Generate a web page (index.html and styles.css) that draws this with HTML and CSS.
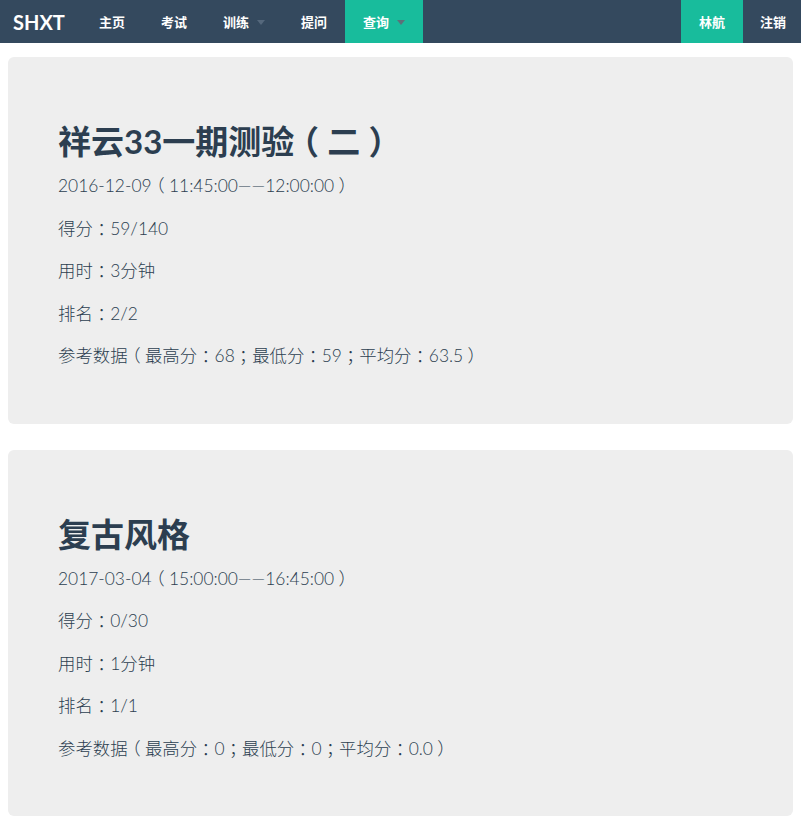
FILE: index.html
```html
<!DOCTYPE html>
<html lang="zh-CN">
<head>
<meta charset="utf-8">
<title>SHXT</title>
<link rel="stylesheet" href="styles.css">
</head>
<body>
<nav class="navbar">
  <a class="brand" href="#">SHXT</a>
  <ul class="nav">
    <li><a href="#">主页</a></li>
    <li><a href="#">考试</a></li>
    <li><a href="#">训练<span class="caret"></span></a></li>
    <li><a href="#">提问</a></li>
    <li class="active"><a href="#">查询<span class="caret"></span></a></li>
  </ul>
  <ul class="nav nav-right">
    <li class="active"><a href="#">林航</a></li>
    <li class="last"><a href="#">注销</a></li>
  </ul>
</nav>
<main class="container">
  <section class="jumbotron">
    <h1>祥云33一期测验<span class="pu">（</span>二<span class="pu">）</span></h1>
    <p>2016-12-09<span class="pu">（</span>11:45:00——12:00:00<span class="pu">）</span></p>
    <p>得分<span class="pu">：</span>59/140</p>
    <p>用时<span class="pu">：</span>3分钟</p>
    <p>排名<span class="pu">：</span>2/2</p>
    <p>参考数据<span class="pu">（</span>最高分<span class="pu">：</span>68<span class="pu">；</span>最低分<span class="pu">：</span>59<span class="pu">；</span>平均分<span class="pu">：</span>63.5<span class="pu">）</span></p>
  </section>
  <section class="jumbotron">
    <h1>复古风格</h1>
    <p>2017-03-04<span class="pu">（</span>15:00:00——16:45:00<span class="pu">）</span></p>
    <p>得分<span class="pu">：</span>0/30</p>
    <p>用时<span class="pu">：</span>1分钟</p>
    <p>排名<span class="pu">：</span>1/1</p>
    <p>参考数据<span class="pu">（</span>最高分<span class="pu">：</span>0<span class="pu">；</span>最低分<span class="pu">：</span>0<span class="pu">；</span>平均分<span class="pu">：</span>0.0<span class="pu">）</span></p>
  </section>
</main>
</body>
</html>
```
FILE: styles.css
```css
* { box-sizing: border-box; }
html, body { margin: 0; padding: 0; }
body {
  font-family: Lato, "Noto Sans CJK SC", sans-serif;
  color: #2c3e50;
  background: #fff;
}
a { text-decoration: none; }

/* full-width punctuation drawn centred in its em box */
.pu {
  display: inline-block;
  width: 1em;
  text-align: center;
  font-feature-settings: "halt" 1;
}

.navbar {
  display: flex;
  height: 43px;
  background: #34495e;
}
.brand {
  display: flex;
  align-items: center;
  width: 81px;
  padding: 0 0 0 13px;
  color: #fff;
  font-weight: 700;
  font-size: 20px;
}
.nav {
  display: flex;
  list-style: none;
  margin: 0;
  padding: 0;
}
.nav li a {
  display: flex;
  align-items: center;
  height: 43px;
  padding: 0 18px;
  color: #fff;
  font-weight: 700;
  font-size: 13px;
}
.nav li.active a { background: #18bc9c; }
.nav-right { margin-left: auto; }
.nav li.last a { padding: 0 15px 0 17px; }
.caret {
  display: inline-block;
  width: 0;
  height: 0;
  margin-left: 8px;
  margin-top: 2px;
  border-left: 4px solid transparent;
  border-right: 4px solid transparent;
  border-top: 5px solid #55687c;
}
.nav li.active .caret { border-top-color: #5d7079; }

.container {
  padding: 14px 8px 0;
}
.jumbotron {
  background: #eeeeee;
  border-radius: 6px;
  padding: 48px 50px 38px;
  margin-bottom: 26px;
}
.jumbotron h1 {
  margin: 18px 0 13px;
  font-size: 33px;
  line-height: 37px;
  font-weight: 700;
  color: #2c3e50;
}
.jumbotron p {
  margin: 0 0 17px;
  font-size: 17.4px;
  line-height: 25.5px;
  font-weight: 300;
  color: #2c3e50;
}
```
